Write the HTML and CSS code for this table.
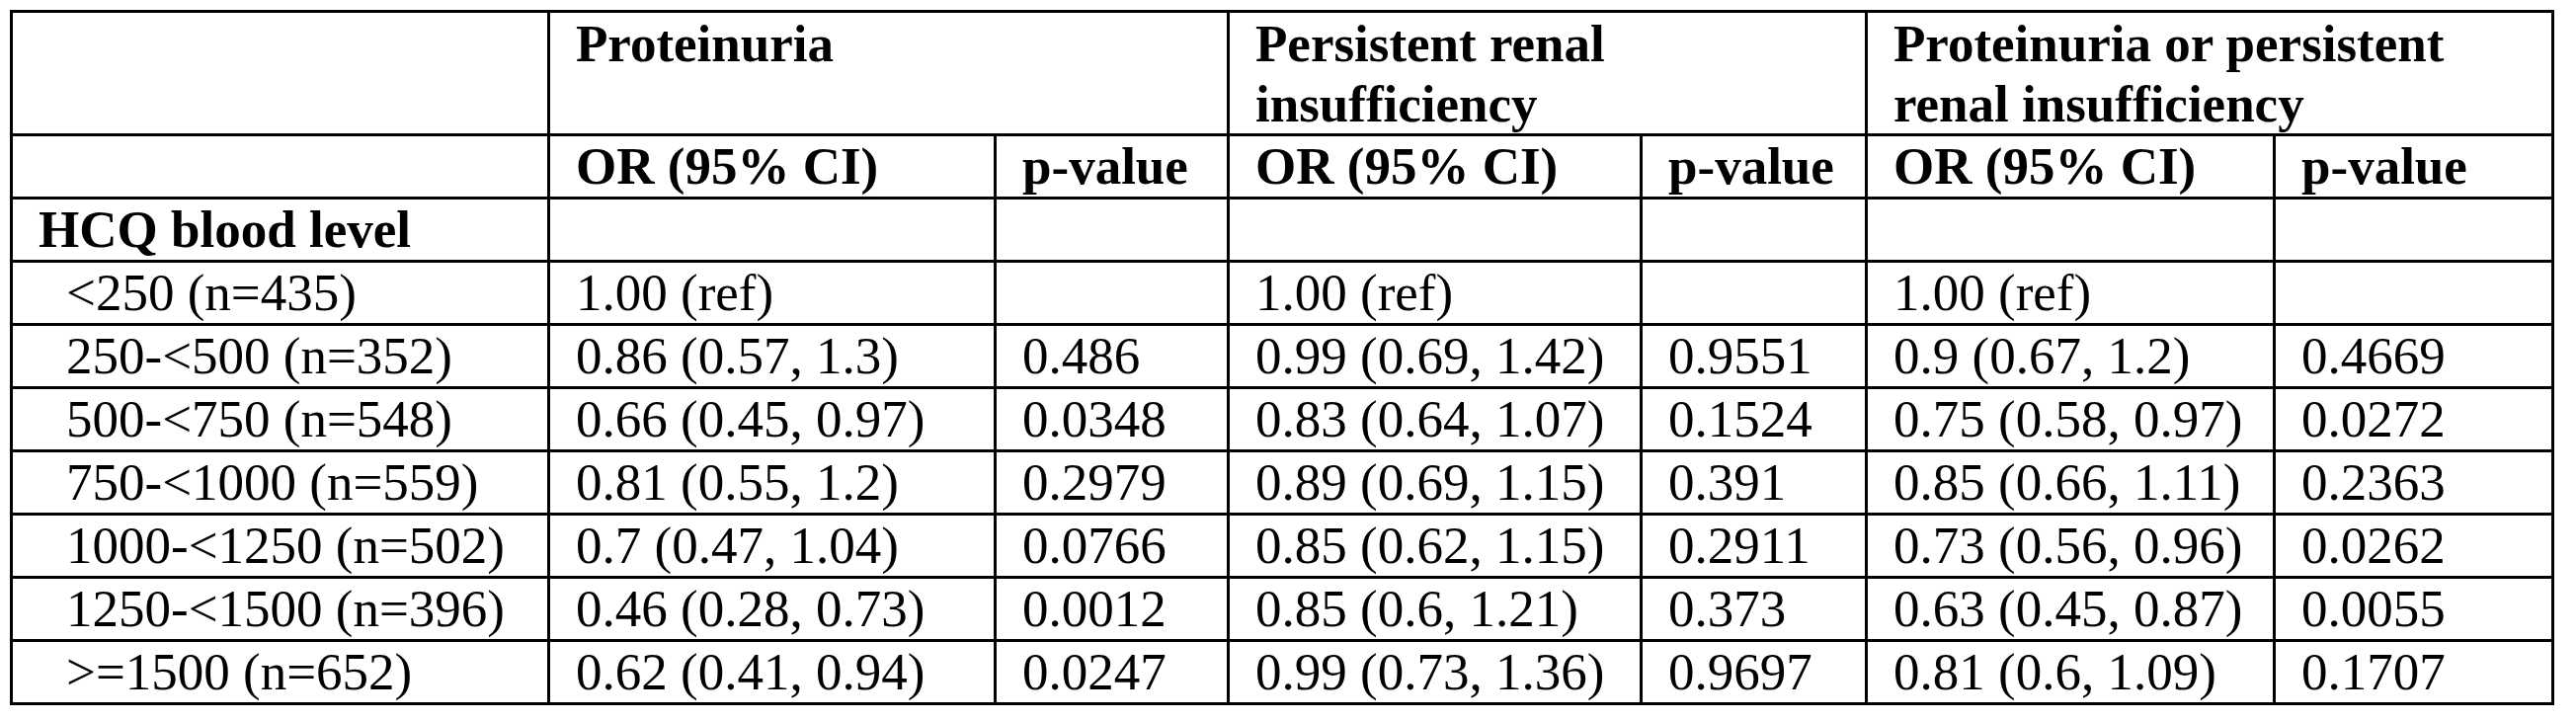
FILE: index.html
```html
<!DOCTYPE html>
<html lang="en">
<head>
<meta charset="utf-8">
<title>HCQ blood level and renal outcomes</title>
<link rel="stylesheet" href="styles.css">
</head>
<body>
<div class="sheet">
  <div class="grid">
    <div class="cell"></div>
    <div class="cell head span2">Proteinuria</div>
    <div class="cell head span2">Persistent renal<br>insufficiency</div>
    <div class="cell head span2">Proteinuria or persistent<br>renal insufficiency</div>

    <div class="cell"></div>
    <div class="cell head">OR (95% CI)</div>
    <div class="cell head">p-value</div>
    <div class="cell head">OR (95% CI)</div>
    <div class="cell head">p-value</div>
    <div class="cell head">OR (95% CI)</div>
    <div class="cell head">p-value</div>

    <div class="cell head">HCQ blood level</div>
    <div class="cell"></div>
    <div class="cell"></div>
    <div class="cell"></div>
    <div class="cell"></div>
    <div class="cell"></div>
    <div class="cell"></div>

    <div class="cell label">&lt;250 (n=435)</div>
    <div class="cell">1.00 (ref)</div>
    <div class="cell"></div>
    <div class="cell">1.00 (ref)</div>
    <div class="cell"></div>
    <div class="cell">1.00 (ref)</div>
    <div class="cell"></div>

    <div class="cell label">250-&lt;500 (n=352)</div>
    <div class="cell">0.86 (0.57, 1.3)</div>
    <div class="cell">0.486</div>
    <div class="cell">0.99 (0.69, 1.42)</div>
    <div class="cell">0.9551</div>
    <div class="cell">0.9 (0.67, 1.2)</div>
    <div class="cell">0.4669</div>

    <div class="cell label">500-&lt;750 (n=548)</div>
    <div class="cell">0.66 (0.45, 0.97)</div>
    <div class="cell">0.0348</div>
    <div class="cell">0.83 (0.64, 1.07)</div>
    <div class="cell">0.1524</div>
    <div class="cell">0.75 (0.58, 0.97)</div>
    <div class="cell">0.0272</div>

    <div class="cell label">750-&lt;1000 (n=559)</div>
    <div class="cell">0.81 (0.55, 1.2)</div>
    <div class="cell">0.2979</div>
    <div class="cell">0.89 (0.69, 1.15)</div>
    <div class="cell">0.391</div>
    <div class="cell">0.85 (0.66, 1.11)</div>
    <div class="cell">0.2363</div>

    <div class="cell label">1000-&lt;1250 (n=502)</div>
    <div class="cell">0.7 (0.47, 1.04)</div>
    <div class="cell">0.0766</div>
    <div class="cell">0.85 (0.62, 1.15)</div>
    <div class="cell">0.2911</div>
    <div class="cell">0.73 (0.56, 0.96)</div>
    <div class="cell">0.0262</div>

    <div class="cell label">1250-&lt;1500 (n=396)</div>
    <div class="cell">0.46 (0.28, 0.73)</div>
    <div class="cell">0.0012</div>
    <div class="cell">0.85 (0.6, 1.21)</div>
    <div class="cell">0.373</div>
    <div class="cell">0.63 (0.45, 0.87)</div>
    <div class="cell">0.0055</div>

    <div class="cell label">&gt;=1500 (n=652)</div>
    <div class="cell">0.62 (0.41, 0.94)</div>
    <div class="cell">0.0247</div>
    <div class="cell">0.99 (0.73, 1.36)</div>
    <div class="cell">0.9697</div>
    <div class="cell">0.81 (0.6, 1.09)</div>
    <div class="cell">0.1707</div>
  </div>
</div>
</body>
</html>
```

FILE: styles.css
```css
html, body {
  margin: 0;
  padding: 0;
  background: #ffffff;
}

.sheet {
  padding: 10px 0 0 10px;
}

.grid {
  display: grid;
  grid-template-columns: 544px 452px 236px 418px 228px 413px 282px;
  width: max-content;
  border-top: 3px solid #000;
  border-left: 3px solid #000;
  font-family: "Liberation Serif", "Times New Roman", serif;
  font-size: 53px;
  line-height: 61px;
  color: #000;
}

.cell {
  box-sizing: border-box;
  border-right: 3px solid #000;
  border-bottom: 3px solid #000;
  padding: 0 0 0 26px;
  min-height: 64px;
  white-space: nowrap;
}

.span2 {
  grid-column: span 2;
  line-height: 60.5px;
  padding-top: 1px;
}

.head {
  font-weight: bold;
}

.label {
  padding-left: 54px;
}
```
